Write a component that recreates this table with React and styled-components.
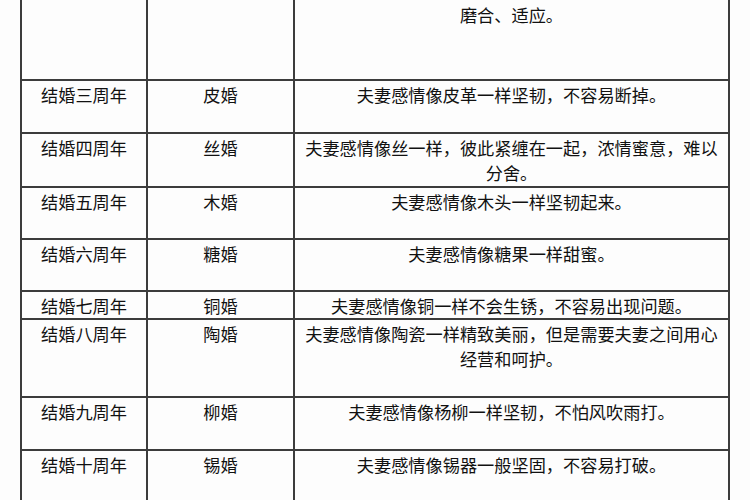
import React from "react";
import styled, { createGlobalStyle } from "styled-components";

const Global = createGlobalStyle`
  html, body { margin: 0; padding: 0; background: #ffffff; }
  body { width: 750px; height: 500px; overflow: hidden; }
`;

const Page = styled.div`
  width: 750px;
  height: 500px;
  overflow: hidden;
  background: #fdfdfd;
  padding-left: 20px;
  box-sizing: border-box;
`;

const Table = styled.table`
  margin-top: -26px;
  border-collapse: collapse;
  table-layout: fixed;
  width: 710px;
  font-family: "Noto Sans CJK SC", "Noto Sans CJK TC", sans-serif;
  font-size: 17.2px;
  line-height: 25px;
  color: #111;
`;

const Row = styled.tr`
  height: ${(p) => p.$h}px;
`;

const Cell = styled.td`
  border: 2px solid #3c3c3c;
  vertical-align: top;
  text-align: center;
  padding: 1px 4px 0 4px;
  overflow: hidden;
`;

const rows = [
  { y: "结婚二周年", n: "棉婚", d: "夫妻感情像棉布一样柔软舒适，但是需要夫妻之间互相磨合、适应。", h: 105 },
  { y: "结婚三周年", n: "皮婚", d: "夫妻感情像皮革一样坚韧，不容易断掉。", h: 53 },
  { y: "结婚四周年", n: "丝婚", d: "夫妻感情像丝一样，彼此紧缠在一起，浓情蜜意，难以分舍。", h: 54 },
  { y: "结婚五周年", n: "木婚", d: "夫妻感情像木头一样坚韧起来。", h: 52 },
  { y: "结婚六周年", n: "糖婚", d: "夫妻感情像糖果一样甜蜜。", h: 52 },
  { y: "结婚七周年", n: "铜婚", d: "夫妻感情像铜一样不会生锈，不容易出现问题。", h: 27 },
  { y: "结婚八周年", n: "陶婚", d: "夫妻感情像陶瓷一样精致美丽，但是需要夫妻之间用心经营和呵护。", h: 78 },
  { y: "结婚九周年", n: "柳婚", d: "夫妻感情像杨柳一样坚韧，不怕风吹雨打。", h: 53 },
  { y: "结婚十周年", n: "锡婚", d: "夫妻感情像锡器一般坚固，不容易打破。", h: 53 },
];

export default function App() {
  return (
    <>
      <Global />
      <Page>
        <Table>
          <colgroup>
            <col style={{ width: 126 }} />
            <col style={{ width: 147 }} />
            <col style={{ width: 435 }} />
          </colgroup>
          <tbody>
            {rows.map((r) => (
              <Row key={r.y} $h={r.h}>
                <Cell>{r.y}</Cell>
                <Cell>{r.n}</Cell>
                <Cell>{r.d}</Cell>
              </Row>
            ))}
          </tbody>
        </Table>
      </Page>
    </>
  );
}
